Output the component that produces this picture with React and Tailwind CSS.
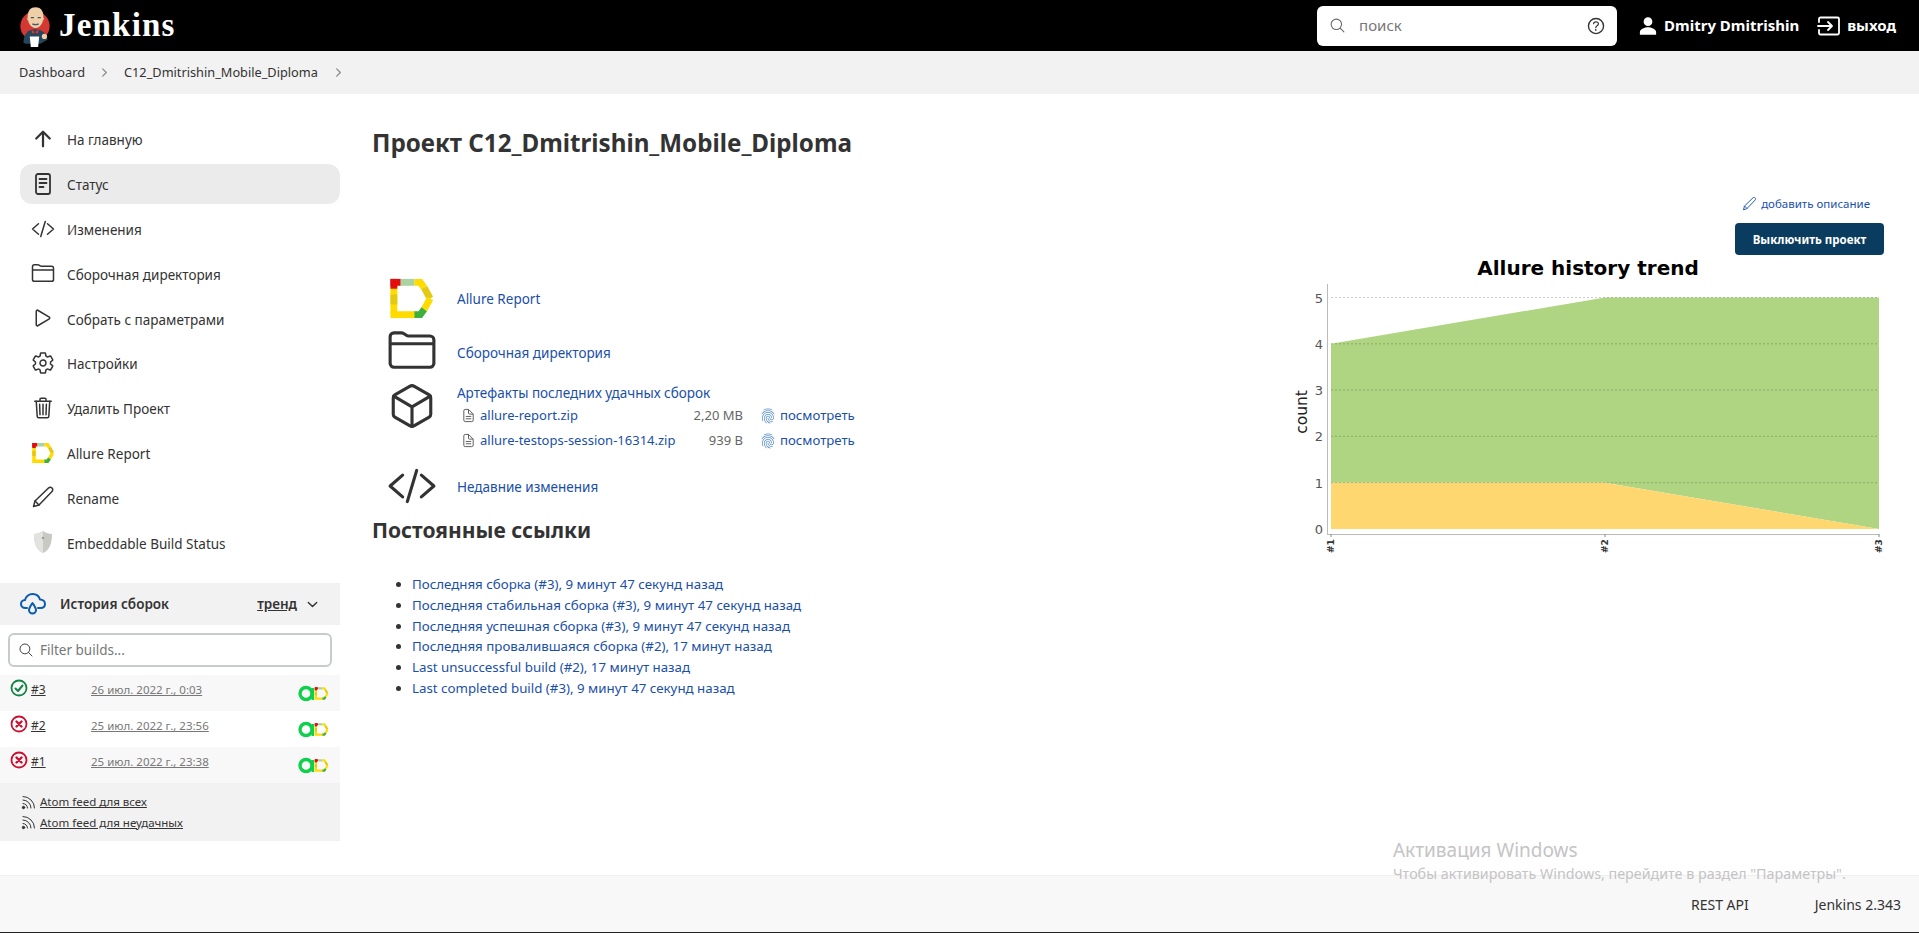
import {
  IoArrowUpOutline,
  IoCodeSlashOutline,
  IoFolderOutline,
  IoPlayOutline,
  IoSettingsOutline,
  IoTrashOutline,
  IoSearchOutline,
  IoHelpCircleOutline,
  IoPersonSharp,
  IoCubeOutline,
  IoFingerPrintOutline,
  IoChevronForward,
  IoChevronDown,
  IoDocumentTextOutline as IoFile,
} from 'react-icons/io5'

function AllureLogo({ size = 24 }) {
  return (
    <svg width={size} height={size} viewBox="0 0 48 48" fill="none" strokeWidth="7">
      <path d="M6 10V40" stroke="#ffdb00" />
      <path d="M6 20V30" stroke="#e3c913" />
      <path d="M6 4V14" stroke="#e30d0d" />
      <path d="M2.500 7.500H13" stroke="#e30d0d" />
      <path d="M13 7.500H27" stroke="#a9d3a0" />
      <path d="M27 7.500H33L37 13" stroke="#ffdb00" />
      <path d="M37 13L43 24" stroke="#e3c913" />
      <path d="M43 24L37 35" stroke="#ffdb00" />
      <path d="M37 35L33 40.500H26" stroke="#3fae3a" />
      <path d="M2.500 40.500H27" stroke="#ffdb00" />
    </svg>
  )
}

function JenkinsLogo() {
  return (
    <svg width="32" height="44" viewBox="0 0 30 42">
      <circle cx="15" cy="21" r="14" fill="#d33833" />
      <path d="M8 12C8 6 11 3 15.500 3S23 6 23 12c0 6-3 11-7.500 11S8 18 8 12z" fill="#eecfa8" />
      <path d="M8 13c-1-1-1 3 1 3zM23 13c1-1 1 3-1 3z" fill="#d8b68f" />
      <path d="M11 13h3M17.500 13h3M12.500 19c2 1 4 1 6 0" stroke="#3c5a6e" strokeWidth="1.200" fill="none" />
      <path d="M4 37c0-8 4-13 11-13s11 4 12 10l-5 3-2 1H6z" fill="#27465c" />
      <path d="M11.500 24l3.500 3 3.500-3-.8 4.500-2.700-1.500-2.700 1.500z" fill="#d33833" />
      <path d="M10 31h9l-1 10h-7z" fill="#fff" />
      <circle cx="24" cy="31" r="2.500" fill="#eecfa8" />
    </svg>
  )
}

function StatusIcon() {
  return (
    <svg width="24" height="24" viewBox="0 0 24 24" fill="none" stroke="#333" strokeWidth="1.800" strokeLinecap="round">
      <rect x="5" y="2" width="14" height="20" rx="2" />
      <path d="M8.500 7h7M8.500 11h7M8.500 15h4" />
    </svg>
  )
}

function PencilIcon({ size = 24, color = '#333' }) {
  return (
    <svg width={size} height={size} viewBox="0 0 24 24" fill="none" stroke={color} strokeWidth="1.500" strokeLinejoin="round" strokeLinecap="round">
      <path d="M2.500 21.500l1.500-5.500L17.500 3c1-1 2.500-1 3.500 0s1 2.500 0 3.500L8 20z" />
      <path d="M4 16l4 4" />
    </svg>
  )
}

function HistoryIcon() {
  return (
    <svg width="28" height="28" viewBox="0 0 28 28" fill="none" stroke="#0b5cad" strokeWidth="2" strokeLinecap="round" strokeLinejoin="round">
      <path d="M8 18H6.500C3.500 18 2 16 2 14s1.500-4 4-4c.5-3.500 4-6 7.500-6s6.500 2 7.500 5.500c3 0 5 2 5 4.500s-2 4-4.500 4H19" />
      <path d="M13.500 13c-2 3-3.500 5-3.500 7a3.500 3.500 0 0 0 7 0c0-2-1.500-4-3.500-7z" />
    </svg>
  )
}

function LogoutIcon() {
  return (
    <svg width="24" height="20" viewBox="0 0 24 20" fill="none" stroke="#fff" strokeWidth="1.800" strokeLinecap="round" strokeLinejoin="round">
      <path d="M2 6V3a1.500 1.500 0 0 1 1.500-1.500h17A1.500 1.500 0 0 1 22 3v14a1.500 1.500 0 0 1-1.500 1.500h-17A1.500 1.500 0 0 1 2 17v-3" />
      <path d="M1 10h14M11 6l4 4-4 4" />
    </svg>
  )
}

function RssIcon() {
  return (
    <svg width="15" height="15" viewBox="0 0 15 15" fill="none" stroke="#333" strokeWidth="1" strokeLinecap="round">
      <circle cx="2.500" cy="12.500" r="1.200" fill="#333" />
      <path d="M2 8.500a4.500 4.500 0 0 1 4.500 4.500M2 5a8 8 0 0 1 8 8M2 1.500A11.500 11.500 0 0 1 13.500 13" />
    </svg>
  )
}

function ShieldIcon() {
  return (
    <svg width="24" height="24" viewBox="0 0 24 24">
      <path d="M12 1c3 2 6 3 9 3 0 9-2 16-9 19C5 20 3 13 3 4c3 0 6-1 9-3z" fill="#c9c9c4" />
      <path d="M12 1c-3 2-6 3-9 3 0 9 2 16 9 19z" fill="#e2e2de" />
      <circle cx="12" cy="8" r="1.200" fill="#9a9a96" />
    </svg>
  )
}

function BuildStatus({ ok }) {
  const color = ok ? '#138347' : '#cc0f31'
  return (
    <svg width="18" height="18" viewBox="0 0 18 18" fill="none" stroke={color} strokeWidth="1.800" strokeLinecap="round" strokeLinejoin="round" className="ml-px mt-px shrink-0">
      <circle cx="9" cy="9" r="7.500" />
      {ok ? (
        <path d="M5.500 9.500l2.500 2.500 4.500-5.500" strokeWidth="2" />
      ) : (
        <path d="M6.500 6.500l5 5M11.500 6.500l-5 5" strokeWidth="2.400" />
      )}
    </svg>
  )
}

function BuildBadge() {
  return (
    <span className="flex items-center">
      <svg width="17" height="17" viewBox="0 0 17 17" fill="none">
        <circle cx="8" cy="8.500" r="6" stroke="#0fcf4c" strokeWidth="3.400" />
        <path d="M14.800 3v12" stroke="#0fcf4c" strokeWidth="2.600" />
      </svg>
      <span className="-ml-px">
        <AllureLogo size={15} />
      </span>
    </span>
  )
}

const navItems = [
  { label: 'На главную', icon: <IoArrowUpOutline size={24} /> },
  { label: 'Статус', icon: <StatusIcon />, active: true },
  { label: 'Изменения', icon: <IoCodeSlashOutline size={24} /> },
  { label: 'Сборочная директория', icon: <IoFolderOutline size={24} /> },
  { label: 'Собрать с параметрами', icon: <IoPlayOutline size={24} /> },
  { label: 'Настройки', icon: <IoSettingsOutline size={24} /> },
  { label: 'Удалить Проект', icon: <IoTrashOutline size={24} /> },
  { label: 'Allure Report', icon: <AllureLogo size={24} /> },
  { label: 'Rename', icon: <PencilIcon /> },
  { label: 'Embeddable Build Status', icon: <ShieldIcon /> },
]

const builds = [
  { id: '#3', date: '26 июл. 2022 г., 0:03', ok: true },
  { id: '#2', date: '25 июл. 2022 г., 23:56' },
  { id: '#1', date: '25 июл. 2022 г., 23:38' },
]

const permalinks = [
  'Последняя сборка (#3), 9 минут 47 секунд назад',
  'Последняя стабильная сборка (#3), 9 минут 47 секунд назад',
  'Последняя успешная сборка (#3), 9 минут 47 секунд назад',
  'Последняя провалившаяся сборка (#2), 17 минут назад',
  'Last unsuccessful build (#2), 17 минут назад',
  'Last completed build (#3), 9 минут 47 секунд назад',
]

const artifacts = [
  { name: 'allure-report.zip', size: '2,20 MB' },
  { name: 'allure-testops-session-16314.zip', size: '939 B' },
]

function TrendChart() {
  const ticks = [
    [0, 275],
    [1, 228.700],
    [2, 182.300],
    [3, 136],
    [4, 89.800],
    [5, 43.500],
  ]
  return (
    <svg width="600" height="320" viewBox="0 0 600 320" className="font-['DejaVu_Sans',sans-serif]">
      <text x="298" y="21" textAnchor="middle" fontSize="20" fontWeight="700" fill="#000">
        Allure history trend
      </text>
      <path d="M41 89.800L315 43.500H589V275L315 228.700H41z" fill="#afd582" />
      <path d="M41 228.700H315L589 275H41z" fill="#ffd770" />
      {ticks.map(([n, y]) => (
        <g key={n}>
          {n > 0 && <line x1="41" x2="589" y1={y} y2={y} stroke="#000" strokeOpacity="0.200" strokeWidth="1" strokeDasharray="2 2" />}
          <text x="33" y={y + 5} textAnchor="end" fontSize="13" fill="#555">{n}</text>
        </g>
      ))}
      <line x1="37.500" x2="37.500" y1="30" y2="280" stroke="#bbb" />
      <line x1="37" x2="589" y1="280.500" y2="280.500" stroke="#bbb" />
      <text transform="translate(17 158) rotate(-90)" textAnchor="middle" fontSize="15.500" fill="#222">count</text>
      {[[41, '#1'], [315, '#2'], [589, '#3']].map(([x, t]) => (
        <g key={t}>
          <line x1={x} x2={x} y1="280" y2="283" stroke="#888" />
          <text transform={`translate(${x + 3} 299) rotate(-90)`} fontSize="9" fontWeight="700" fill="#333">{t}</text>
        </g>
      ))}
    </svg>
  )
}

export default function App() {
  return (
    <div className="relative flex h-[933px] flex-col overflow-hidden bg-white font-['Noto_Sans',sans-serif] text-[#333]">
      {/* Header */}
      <header className="flex h-[51px] shrink-0 items-center bg-black pl-[19px] pr-[23px] text-white">
        <JenkinsLogo />
        <span className="ml-[8px] font-['Liberation_Serif',serif] text-[33px] font-bold leading-none tracking-[1.200px]">Jenkins</span>
        <div className="ml-auto flex h-10 w-[300px] items-center rounded-md bg-white pl-3 pr-[10px] text-[#666]">
          <IoSearchOutline size={17} />
          <span className="ml-[13px] text-[15px] text-[#777]">поиск</span>
          <IoHelpCircleOutline size={22} className="ml-auto text-[#333]" />
        </div>
        <IoPersonSharp size={20} className="ml-[21px]" />
        <span className="ml-[6px] whitespace-nowrap text-[15px] font-bold">Dmitry Dmitrishin</span>
        <span className="ml-[18px]"><LogoutIcon /></span>
        <span className="ml-[6px] text-[15px] font-bold">выход</span>
      </header>

      {/* Breadcrumbs */}
      <nav className="flex h-[43px] shrink-0 items-center bg-[#f2f2f2] pl-[19px] text-[12.750px] text-[#333]">
        <span>Dashboard</span>
        <IoChevronForward size={13} className="mx-[13px] text-[#888]" />
        <span>C12_Dmitrishin_Mobile_Diploma</span>
        <IoChevronForward size={13} className="ml-[14px] text-[#888]" />
      </nav>

      <div className="flex min-h-0 flex-1">
        {/* Sidebar */}
        <aside className="w-[340px] shrink-0 pt-[25px]">
          <div className="flex flex-col gap-[4.800px] pl-5">
            {navItems.map((item) => (
              <div
                key={item.label}
                className={`flex h-10 items-center rounded-xl pl-[11px] text-[13.500px] ${item.active ? 'bg-[#ebebeb]' : ''}`}
              >
                <span className="flex w-6 justify-center text-[#333]">{item.icon}</span>
                <span className="ml-[12px] mt-[3px]">{item.label}</span>
              </div>
            ))}
          </div>

          <div className="mt-[21px]">
            <div className="flex h-[42px] items-center bg-[#f2f2f2] pl-[19px] pr-[20px]">
              <HistoryIcon />
              <span className="ml-[13px] text-[13.500px] font-semibold">История сборок</span>
              <span className="ml-auto text-[13.500px] font-semibold underline">тренд</span>
              <IoChevronDown size={15} className="ml-[8px]" />
            </div>
            <div className="flex h-[50px] items-center px-2">
              <div className="flex h-[34px] w-full items-center rounded-md border-2 border-[#c6cbcb] pl-2 text-[13.500px] text-[#777]">
                <IoSearchOutline size={16} className="text-[#444]" />
                <span className="ml-[6px]">Filter builds...</span>
              </div>
            </div>
            {builds.map((b, i) => (
              <div key={b.id} className={`flex h-9 items-start pl-[9px] pr-[11px] pt-[3px] text-[12px] ${i !== 1 ? 'bg-[#f8f8f8]' : ''}`}>
                <BuildStatus ok={b.ok} />
                <span className="ml-[3px] mt-[3px] underline">{b.id}</span>
                <span className="absolute left-[91px] mt-[3px] text-[11.500px] text-[#777] underline">{b.date}</span>
                <span className="ml-auto pt-[7px]"><BuildBadge /></span>
              </div>
            ))}
            <div className="flex h-[58px] flex-col justify-center gap-[3px] bg-[#f2f2f2] pl-[21px] text-[11.500px]">
              {['Atom feed для всех', 'Atom feed для неудачных'].map((t) => (
                <div key={t} className="flex items-center gap-[4px]">
                  <RssIcon />
                  <span className="underline">{t}</span>
                </div>
              ))}
            </div>
          </div>
        </aside>

        {/* Main */}
        <main className="min-w-0 flex-1 pl-8 pr-[35px] pt-[32px]">
          <h1 className="text-[24.200px] font-bold leading-[34px]">Проект C12_Dmitrishin_Mobile_Diploma</h1>

          <div className="mt-[35px] flex flex-col items-end">
            <div className="mr-[14px] flex items-center gap-1 text-[11.500px] text-[#1a4fa8]">
              <PencilIcon size={15} color="#1a4fa8" />
              <span>добавить описание</span>
            </div>
            <button className="mt-[11px] h-[32px] w-[149px] rounded bg-[#0a3c60] text-[11.500px] font-bold text-white">
              Выключить проект
            </button>
          </div>

          <div className="-mr-[6px] flex justify-between">
            <div className="w-[560px]">
              <div className="pl-[14px] pt-[16px]">
                <div className="flex h-[54px] items-center text-[#333]">
                  <span className="flex w-[51px] justify-center"><AllureLogo size={47} /></span>
                  <span className="ml-[20px] mt-[1px] text-[13.500px] text-[#1a4fa8]">Allure Report</span>
                </div>
                <div className="flex h-[50px] items-center">
                  <span className="flex w-[51px] justify-center"><IoFolderOutline size={50} /></span>
                  <span className="ml-[20px] mt-[6px] text-[13.500px] text-[#1a4fa8]">Сборочная директория</span>
                </div>
                <div className="mt-[2px] flex h-[82px]">
                  <span className="flex w-[51px] justify-center pt-[4px]"><IoCubeOutline size={50} /></span>
                  <div className="ml-[20px] flex-1 text-[13.500px] text-[#1a4fa8]">
                    <div className="pt-[5px] leading-[22px]">Артефакты последних удачных сборок</div>
                    {artifacts.map((a) => (
                      <div key={a.name} className="-mt-px mb-px flex h-[25px] items-center whitespace-nowrap text-[13px]">
                        <IoFile size={15} className="ml-1 text-[#555]" />
                        <span className="ml-[4px] w-[213px]">{a.name}</span>
                        <span className="w-[50px] text-right text-[#666]">{a.size}</span>
                        <IoFingerPrintOutline size={16} className="ml-[17px] text-[#5a8fc9]" />
                        <span className="ml-[4px] text-[13.200px]">посмотреть</span>
                      </div>
                    ))}
                  </div>
                </div>
                <div className="flex h-[54px] items-center">
                  <span className="flex w-[51px] justify-center"><IoCodeSlashOutline size={50} /></span>
                  <span className="ml-[20px] mt-[2px] text-[13.500px] text-[#1a4fa8]">Недавние изменения</span>
                </div>
              </div>

              <h2 className="mt-[3px] text-[21px] font-bold leading-[28px]">Постоянные ссылки</h2>
              <ul className="ml-[40px] mt-[30px] list-disc text-[13.300px] leading-[20.700px] text-[#1a4fa8] marker:text-[#333]">
                {permalinks.map((t) => (
                  <li key={t}>{t}</li>
                ))}
              </ul>
            </div>
            <div className="-mt-px">
              <TrendChart />
            </div>
          </div>
        </main>
      </div>

      {/* Footer */}
      <footer className="flex h-[57px] shrink-0 items-center justify-end gap-[66px] border-t border-[#efefef] bg-[#f8f8f8] pr-[18px] text-[14px]">
        <span>REST API</span>
        <span>Jenkins 2.343</span>
      </footer>
      <div className="h-px shrink-0 bg-[#222]" />

      {/* Windows watermark */}
      <div className="pointer-events-none absolute left-[1393px] top-[837px] text-[#c4c4c4]">
        <div className="text-[19px] leading-[26px]">Активация Windows</div>
        <div className="text-[14.300px] leading-[21px]">Чтобы активировать Windows, перейдите в раздел "Параметры".</div>
      </div>
    </div>
  )
}
